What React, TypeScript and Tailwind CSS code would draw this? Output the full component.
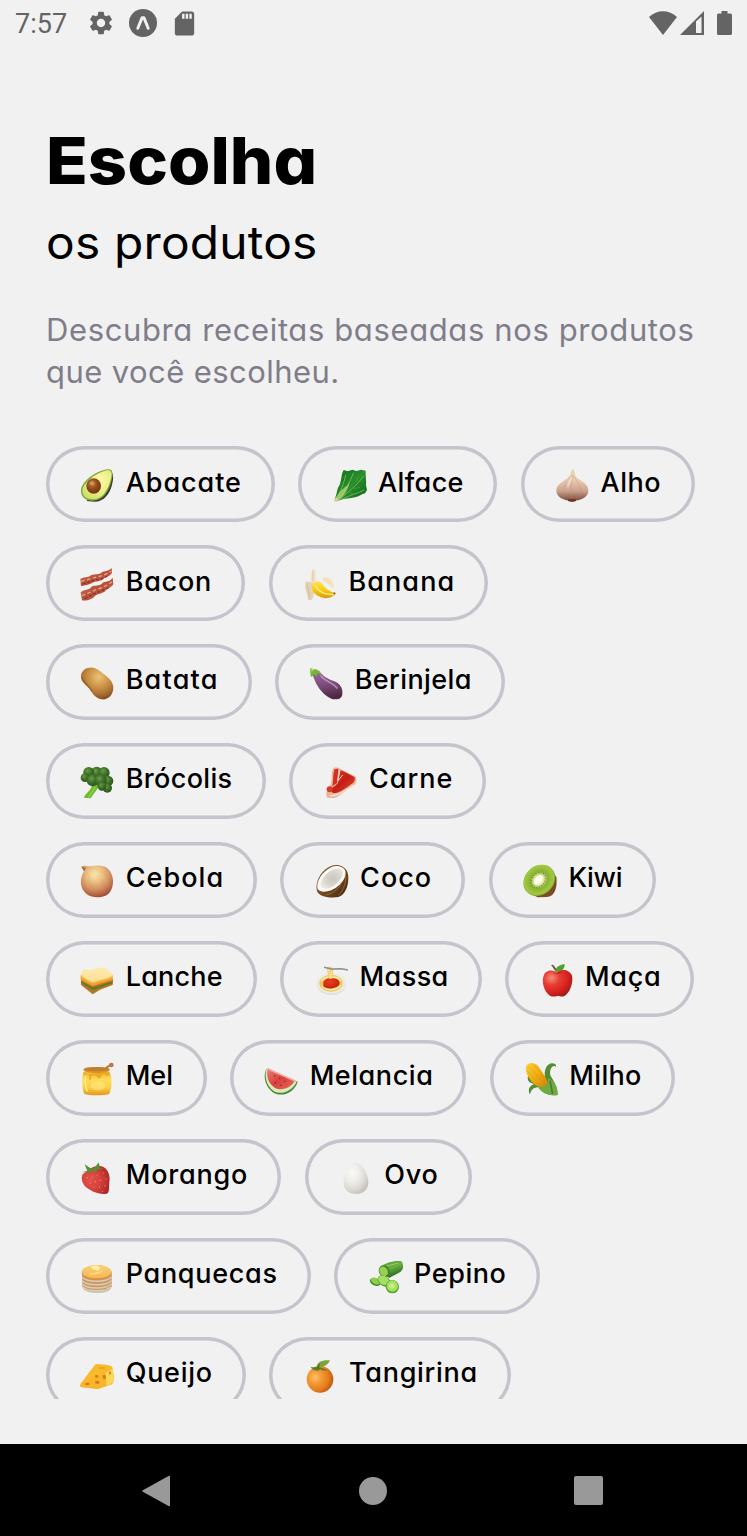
import type { ReactNode } from "react";
import { MdSdCard, MdSettings } from "react-icons/md";

type Stops = string[];

function Radial({ id, c, at = [0.4, 0.35], r = 0.7 }: { id: string; c: Stops; at?: number[]; r?: number }) {
  return (
    <radialGradient id={id} cx={at[0]} cy={at[1]} r={r}>
      {c.map((color, i) => (
        <stop key={i} offset={i / (c.length - 1)} stopColor={color} />
      ))}
    </radialGradient>
  );
}

function Linear({ id, c, to = [0, 1] }: { id: string; c: Stops; to?: number[] }) {
  return (
    <linearGradient id={id} x1="0" y1="0" x2={to[0]} y2={to[1]}>
      {c.map((color, i) => (
        <stop key={i} offset={i / (c.length - 1)} stopColor={color} />
      ))}
    </linearGradient>
  );
}

const drawings: Record<string, ReactNode> = {
  Abacate: (
    <>
      <Radial id="av1" c={["#fdf9a8", "#eef08a", "#cfe06a"]} at={[0.6, 0.35]} />
      <Radial id="av2" c={["#c98245", "#8f4a1c", "#6c3413"]} />
      <path d="M88 8C103 12 100 36 96 50C90 76 72 101 44 101L20 99Z" fill="#3c3a34" />
      <path d="M84 4C97 3 99 14 97 26C93 52 78 98 38 98C14 98 2 86 3 66C5 42 46 8 84 4Z" fill="#7fa83a" />
      <path d="M84 7C94 7 96 15 94 26C88 52 75 94 38 94C17 94 7 83 7 67C9 45 50 11 84 7Z" fill="url(#av1)" />
      <ellipse cx="41" cy="54" rx="22" ry="23" fill="url(#av2)" />
      <ellipse cx="36" cy="46" rx="7" ry="6" fill="#dca06a" opacity=".7" />
    </>
  ),
  Alface: (
    <>
      <Linear id="lt1" c={["#0b6b1c", "#2a8f2c", "#0c5f1c"]} to={[1, 1]} />
      <path d="M32 6L44 10L58 5L70 9L84 5L98 8C97 24 101 38 99 52L102 66L96 76C86 78 78 86 66 88C50 92 36 92 22 96L8 100L5 92C12 82 10 66 18 54C26 40 24 18 32 6Z" fill="url(#lt1)" />
      <path d="M20 90C18 70 34 48 38 20M22 90C36 68 52 40 62 14M22 92C48 70 72 52 92 24M24 94C50 82 76 76 94 66" stroke="#7cc35a" strokeWidth="3" fill="none" opacity=".8" />
      <path d="M40 62L30 52M64 62L80 58M50 74L66 80M70 42L74 26" stroke="#3f9f36" strokeWidth="3" />
      <path d="M6 99C4 90 14 82 18 74C28 62 40 56 50 44C44 64 36 80 24 90C20 98 12 101 6 99Z" fill="#a9d077" opacity=".85" />
      <circle cx="10" cy="95" r="6" fill="#d9c6a4" />
    </>
  ),
  Alho: (
    <>
      <Linear id="ga1" c={["#e8d6a8", "#e6cdb2", "#cda290", "#74432f"]} />
      <path d="M53 4C58 5 58 14 60 22C66 36 100 42 100 68C100 86 80 96 64 97C60 102 44 102 40 97C24 96 4 86 4 68C4 44 38 36 45 22C48 14 49 6 53 4Z" fill="url(#ga1)" />
      <path d="M50 22C32 44 22 54 26 90M53 22C50 50 46 62 50 97M56 24C70 48 84 60 76 90" stroke="#b98a78" strokeWidth="2" fill="none" opacity=".5" />
      <path d="M48 26C38 42 36 50 38 62C44 46 50 38 52 26Z" fill="#fff2d8" opacity=".5" />
      <ellipse cx="51" cy="97" rx="13" ry="4" fill="#69351f" />
    </>
  ),
  Bacon: (
    <>
      <Linear id="bc1" c={["#d77a5e", "#b5503a", "#cd6b50"]} to={[1, 1]} />
      <path d="M1 36C12 28 22 34 34 24C46 20 58 24 68 14C78 12 86 12 95 3L96 18C88 30 78 28 68 38C54 44 44 42 32 50C20 56 10 54 3 58Z" fill="url(#bc1)" />
      <path d="M2 76C14 66 26 72 36 58C50 54 60 58 70 46C80 42 90 44 98 32L100 52C92 64 84 62 74 74C60 82 48 80 40 92C28 99 14 102 6 100Z" fill="url(#bc1)" />
      <path d="M3 43C22 38 38 34 50 30C66 26 80 22 94 12M5 86C20 80 34 76 48 68C66 62 82 56 99 42" stroke="#e9a283" strokeWidth="4" fill="none" strokeDasharray="11 7" />
      <path d="M8 51C28 46 42 38 58 38L82 28M14 95C34 86 50 76 64 72L90 60" stroke="#8f3022" strokeWidth="3.5" fill="none" strokeDasharray="9 5" />
    </>
  ),
  Banana: (
    <>
      <Linear id="bn1" c={["#ffe45c", "#f8cb13", "#d99a08"]} />
      <path d="M32 4C42 12 42 36 38 52L24 54C20 36 22 16 32 4Z" fill="#f2e5cf" />
      <path d="M60 32C76 26 94 42 93 64C82 60 74 46 60 42Z" fill="#f3e3b8" />
      <path d="M8 44C16 42 32 48 38 54C34 72 34 86 26 99L14 98C18 84 2 70 8 44Z" fill="#e5d2b5" />
      <path d="M12 50L20 94M30 10L30 44" stroke="#cbb28d" strokeWidth="2" />
      <path d="M28 50C38 40 50 40 58 50C64 62 80 74 98 78C90 94 64 98 48 88C34 82 22 66 28 50Z" fill="url(#bn1)" />
      <path d="M36 54C44 70 62 84 92 82" stroke="#fff08e" strokeWidth="4" fill="none" />
      <path d="M91 76L98 78L94 84Z" fill="#6f5413" />
    </>
  ),
  Batata: (
    <>
      <Radial id="pt1" c={["#ecc27a", "#d39c4d", "#b07333", "#704019"]} at={[0.55, 0.3]} r={0.78} />
      <path d="M24 6C42 0 54 10 66 20C82 32 100 44 100 66C99 88 84 103 64 100C48 96 38 86 30 70C18 56 0 46 3 28C5 16 14 8 24 6Z" fill="url(#pt1)" />
      <path d="M6 34C12 52 28 60 36 76" stroke="#714016" strokeWidth="4" fill="none" opacity=".5" />
    </>
  ),
  Berinjela: (
    <>
      <Linear id="eg1" c={["#9d6aa2", "#80507f", "#512947"]} to={[0.2, 1]} />
      <path d="M10 20L30 14C42 30 54 38 72 44C94 52 102 66 100 84C99 96 90 101 78 100C50 98 18 60 10 20Z" fill="url(#eg1)" />
      <path d="M36 30C48 46 72 50 84 66" stroke="#c6a1ca" strokeWidth="5" fill="none" strokeLinecap="round" opacity=".75" />
      <path d="M3 8L12 11C22 6 34 14 36 27L26 21L22 32L16 24L8 34C2 26 5 18 3 8Z" fill="#75b536" />
      <path d="M2 6L9 5L14 15L8 16Z" fill="#a9d95e" />
    </>
  ),
  "Brócolis": (
    <>
      <Radial id="br1" c={["#6c9b45", "#3d7029", "#285119"]} />
      <path d="M36 60L60 60C50 76 42 84 32 100L12 98C14 86 34 78 36 60Z" fill="#6dbb2a" />
      <path d="M46 66L26 96" stroke="#9bd256" strokeWidth="4" />
      <g fill="url(#br1)">
        <circle cx="50" cy="23" r="18" /><circle cx="26" cy="22" r="16" /><circle cx="72" cy="23" r="17" />
        <circle cx="15" cy="38" r="13" /><circle cx="84" cy="48" r="16" /><circle cx="38" cy="46" r="18" />
        <circle cx="62" cy="46" r="18" /><circle cx="82" cy="69" r="14" /><circle cx="66" cy="64" r="13" />
      </g>
    </>
  ),
  Carne: (
    <>
      <Linear id="mt1" c={["#e33b28", "#c51f15", "#df4632"]} to={[1, 1]} />
      <path d="M28 9C36 5 44 8 50 12L66 20L94 34C102 48 96 62 80 68C62 78 48 96 28 99L10 98C2 84 12 70 20 58C26 40 20 20 28 9Z" fill="#e9b49c" />
      <path d="M32 13L43 11L39 54L25 64C29 46 26 26 32 13Z" fill="#d62d1e" />
      <path d="M49 15L64 22L92 37C95 52 84 56 72 65C56 74 46 85 27 84C19 79 22 67 32 64L42 54Z" fill="url(#mt1)" />
      <path d="M48 14L41 48L56 30" stroke="#f8ddcd" strokeWidth="3" fill="none" />
      <circle cx="17" cy="73" r="9" fill="#d83928" />
      <path d="M18 92C44 94 58 79 90 60" stroke="#fce6d2" strokeWidth="4" fill="none" />
    </>
  ),
  Cebola: (
    <>
      <Radial id="on1" c={["#f9e9ac", "#ecc084", "#d18c5e", "#a14a31"]} at={[0.43, 0.27]} r={0.75} />
      <path d="M4 8C12 2 22 8 30 7C48 4 70 2 84 14C104 34 102 66 90 84C78 103 38 105 20 90C-2 74 -1 40 12 22Z" fill="url(#on1)" />
      <path d="M14 14C6 38 10 72 36 96M18 12C28 50 38 76 58 99M20 12C56 32 76 62 82 90M22 10C60 16 84 32 96 58" stroke="#af6843" strokeWidth="1.5" fill="none" opacity=".2" />
      <path d="M4 8L12 22L18 12Z" fill="#a56b42" />
    </>
  ),
  Coco: (
    <>
      <Linear id="co1" c={["#806348", "#7a4c22", "#40240f"]} to={[1, 1]} />
      <Radial id="co2" c={["#c9c7be", "#d8d6ce", "#f2f1ec"]} at={[0.55, 0.5]} />
      <path d="M48 6C68 -1 90 6 98 26C105 54 94 92 70 99C48 103 16 99 7 84C-2 60 14 20 48 6Z" fill="url(#co1)" />
      <path d="M50 9C64 2 86 8 91 20C95 38 82 56 68 67C52 82 20 90 8 76C2 52 22 22 50 9Z" fill="#faf9f4" />
      <path d="M52 17C66 11 78 13 83 23C86 35 76 46 64 60C48 74 26 78 17 70C13 51 32 27 52 17Z" fill="url(#co2)" />
      <path d="M92 36C94 58 84 80 70 94M78 60C68 78 52 88 34 93" stroke="#a57f54" strokeWidth="2" fill="none" />
    </>
  ),
  Kiwi: (
    <>
      <Radial id="ki1" c={["#fffbe2", "#e6eeb0", "#8bb035", "#9cc53a", "#aed046"]} at={[0.5, 0.5]} r={0.58} />
      <path d="M86 16L100 40C104 72 94 98 72 99L44 100L24 90Z" fill="#7c4c2a" />
      <ellipse cx="49" cy="49" rx="51" ry="43" transform="rotate(-42 49 49)" fill="#86ae2e" />
      <ellipse cx="48" cy="48" rx="49" ry="41" transform="rotate(-42 48 48)" fill="url(#ki1)" />
      <ellipse cx="46" cy="48" rx="25" ry="19" transform="rotate(-52 46 48)" fill="none" stroke="#56752a" strokeWidth="4" strokeDasharray="2 6" />
      <ellipse cx="46" cy="48" rx="17" ry="10" transform="rotate(-52 46 48)" fill="#fffce9" />
    </>
  ),
  Lanche: (
    <>
      <Linear id="sa1" c={["#fdecb0", "#f9df94"]} to={[0, 1]} />
      <path d="M3 50L38 70L99 52L98 66L60 80L38 94L3 66Z" fill="#b87428" />
      <path d="M3 48L38 68L99 50L97 61L38 82L4 60Z" fill="#5d7f22" />
      <path d="M3 46L38 66L99 48L99 54L38 73L3 54Z" fill="#e2701f" />
      <path d="M2 38L38 60L99 40L98 50L38 68L2 50Z" fill="#eda437" />
      <path d="M8 22C18 18 26 24 38 18C52 16 64 10 74 14C84 22 94 26 99 38C90 48 62 52 38 58C22 54 14 46 2 38C2 32 6 28 8 22Z" fill="url(#sa1)" />
      <path d="M2 38C14 46 22 54 38 58C62 52 90 48 99 38" stroke="#f4c34f" strokeWidth="4" fill="none" />
    </>
  ),
  Massa: (
    <>
      <Radial id="sp1" c={["#e93d20", "#d92e17", "#bf210f"]} />
      <ellipse cx="52" cy="64" rx="44" ry="32" fill="#dedede" />
      <ellipse cx="52" cy="61" rx="44" ry="31" fill="#eeeae0" />
      <ellipse cx="51" cy="61" rx="35" ry="25" fill="#eec75f" />
      <path d="M22 54C32 38 70 38 80 54M24 70C40 84 66 84 80 66" stroke="#fff0a6" strokeWidth="4" fill="none" />
      <path d="M28 62C26 50 42 44 54 46C70 44 80 54 76 66C66 78 38 80 28 70Z" fill="url(#sp1)" />
      <path d="M38 14C46 8 58 12 58 20L54 48L44 46Z" fill="#f1cb70" />
      <path d="M44 18L48 46M53 16L50 46" stroke="#fff0ba" strokeWidth="2" />
      <path d="M30 13L52 18L82 17L102 21" stroke="#8d9090" strokeWidth="4.5" fill="none" />
    </>
  ),
  "Maça": (
    <>
      <Radial id="ap1" c={["#f58e78", "#e73e34", "#d9221f", "#991a17"]} at={[0.3, 0.3]} r={0.8} />
      <path d="M50 28C42 22 40 12 33 6L39 5C46 11 50 20 54 26Z" fill="#76543a" />
      <path d="M46 25C48 10 62 4 74 4C74 18 64 30 48 29Z" fill="#51a131" />
      <path d="M50 29C62 16 88 18 96 38C101 60 88 92 72 100C62 102 58 98 52 99C44 101 36 102 30 98C12 86 4 56 11 38C18 19 40 20 50 29Z" fill="url(#ap1)" />
      <path d="M40 29C46 34 60 33 64 27C58 25 54 30 50 31Z" fill="#a72018" />
    </>
  ),
  Mel: (
    <>
      <Linear id="ho1" c={["#f3b42b", "#ffdc5a", "#fbcf42", "#df981a"]} />
      <path d="M78 18L92 8" stroke="#a96d37" strokeWidth="5" />
      <circle cx="94" cy="9" r="7" fill="#b97843" />
      <path d="M12 30C4 44 6 82 13 96C28 101 74 101 88 96C96 76 97 44 88 30Z" fill="url(#ho1)" />
      <path d="M10 38V30C20 36 24 36 27 42V53C30 59 34 52 35 42C44 36 50 42 54 48C60 56 64 42 68 37C76 35 80 46 88 38V30Z" fill="#e9a324" opacity=".8" />
      <ellipse cx="50" cy="24" rx="40" ry="9" fill="#d99025" />
      <ellipse cx="50" cy="21" rx="38" ry="6" fill="#c07f2b" />
      <path d="M17 42C14 60 17 76 22 88" stroke="#fff2a1" strokeWidth="4" fill="none" />
      <ellipse cx="54" cy="72" rx="22" ry="14" fill="#fff3a0" opacity=".4" />
    </>
  ),
  Melancia: (
    <>
      <Linear id="wa1" c={["#e78178", "#d9413d", "#e36a60"]} to={[1, 1]} />
      <path d="M8 20C-5 42 4 76 28 92C58 108 93 88 101 59Z" fill="#478a38" />
      <path d="M8 20C-1 46 10 76 32 89C58 100 88 82 98 59Z" fill="#dceab8" />
      <path d="M12 19C5 40 12 64 32 77C54 88 80 78 92 57Z" fill="url(#wa1)" />
      <path d="M10 20L94 57" stroke="#f0aba2" strokeWidth="5" />
      <g fill="#8e3029"><circle cx="32" cy="42" r="2.5" /><circle cx="47" cy="49" r="2.5" /><circle cx="62" cy="58" r="2.5" /><circle cx="34" cy="62" r="2.5" /><circle cx="51" cy="70" r="2.5" /></g>
    </>
  ),
  Milho: (
    <>
      <Linear id="cn1" c={["#fbcf3a", "#efab10", "#c98009"]} to={[1, 1]} />
      <path d="M66 56C56 34 66 4 84 4C93 4 97 8 96 14C84 6 74 26 80 42C90 58 101 76 101 99C76 103 54 94 46 76C28 74 20 86 18 98C8 78 22 70 30 66C20 62 8 60 12 42C16 36 40 30 66 56Z" fill="#558b35" />
      <path d="M8 10C20 -3 40 4 48 20C60 38 72 56 76 76C54 82 32 74 18 52C8 38 2 22 8 10Z" fill="url(#cn1)" />
      <path d="M14 16C34 32 50 52 66 72M28 8C48 28 60 50 72 68M11 28C26 42 34 60 50 73" stroke="#b87909" strokeWidth="2" strokeDasharray="4 4" fill="none" opacity=".7" />
      <path d="M72 48C94 58 102 78 101 99C76 104 46 90 42 72C58 80 72 74 72 48Z" fill="#6dac43" />
      <path d="M78 56L86 96" stroke="#4f7a30" strokeWidth="5" />
    </>
  ),
  Morango: (
    <>
      <Radial id="st1" c={["#e3524a", "#d4403b", "#a92222"]} at={[0.3, 0.5]} r={0.78} />
      <path d="M8 40C22 28 42 10 64 16C82 20 92 42 88 62C87 82 88 96 80 98C60 102 26 90 12 72C4 60 4 48 8 40Z" fill="url(#st1)" />
      <path d="M4 34L22 30L14 10L35 24L44 20L56 4L60 20L72 22L54 25L44 34L38 27L26 38L24 32Z" fill="#559134" />
      <g fill="#f0a065"><circle cx="22" cy="50" r="1.8" /><circle cx="36" cy="48" r="1.8" /><circle cx="52" cy="42" r="1.8" /><circle cx="70" cy="36" r="1.8" /><circle cx="30" cy="66" r="1.8" /><circle cx="46" cy="62" r="1.8" /><circle cx="62" cy="58" r="1.8" /><circle cx="78" cy="54" r="1.8" /><circle cx="42" cy="78" r="1.8" /><circle cx="58" cy="78" r="1.8" /><circle cx="75" cy="74" r="1.8" /><circle cx="67" cy="91" r="1.8" /></g>
    </>
  ),
  Ovo: (
    <>
      <Radial id="ov1" c={["#f8f8f6", "#efefeb", "#dddbd5", "#bfbcb4"]} at={[0.35, 0.32]} r={0.78} />
      <path d="M50 5C68 5 88 38 88 64C88 87 72 99 51 99C28 99 14 86 14 64C14 38 32 5 50 5Z" fill="url(#ov1)" />
    </>
  ),
  Panquecas: (
    <>
      <Linear id="pc1" c={["#f9d078", "#f5b653"]} />
      <ellipse cx="51" cy="83" rx="42" ry="16" fill="#c5c3bf" />
      <path d="M6 38H95V80C84 99 16 98 7 80Z" fill="#c39a70" />
      <path d="M6 52C22 68 78 68 94 52M6 62C22 78 78 78 94 62M7 72C22 88 78 88 94 72M8 81C24 96 78 96 92 81" stroke="#e3cba9" strokeWidth="4.5" fill="none" />
      <ellipse cx="50" cy="38" rx="45" ry="22" fill="#d98f3c" />
      <ellipse cx="50" cy="35" rx="44" ry="20" fill="url(#pc1)" />
      <path d="M32 18L50 16L62 23L54 32L38 28Z" fill="#ffeea0" />
      <path d="M28 42C44 42 60 38 68 32" stroke="#fbdc82" strokeWidth="5" fill="none" />
    </>
  ),
  Pepino: (
    <>
      <Linear id="pe1" c={["#4c9b2d", "#6cb042", "#24631d"]} to={[0.5, 1]} />
      <path d="M34 22C50 7 78 1 97 4C106 14 103 28 94 36L60 54Z" fill="url(#pe1)" />
      <path d="M52 18L88 9" stroke="#9fce68" strokeWidth="3" />
      <ellipse cx="46" cy="34" rx="16" ry="19" transform="rotate(-28 46 34)" fill="#3f852c" />
      <ellipse cx="44" cy="34" rx="12" ry="15" transform="rotate(-28 44 34)" fill="#98d152" />
      <ellipse cx="19" cy="66" rx="17" ry="11" transform="rotate(24 19 66)" fill="#409029" />
      <ellipse cx="20" cy="63" rx="15" ry="9" transform="rotate(24 20 63)" fill="#8fcf4a" />
      <ellipse cx="45" cy="63" rx="21" ry="15" transform="rotate(35 45 63)" fill="#49952d" />
      <ellipse cx="44" cy="61" rx="18" ry="13" transform="rotate(35 44 61)" fill="#a6dd62" />
      <circle cx="70" cy="80" r="20" fill="#55a333" />
      <circle cx="70" cy="78" r="17" fill="#a6e060" />
      <circle cx="69" cy="78" r="8" fill="#c6ef8b" />
    </>
  ),
  Queijo: (
    <>
      <Linear id="ch1" c={["#fbc744", "#f5a818"]} to={[1, 1]} />
      <path d="M1 76L46 16L84 18L97 24L102 66L96 76L54 90L1 84Z" fill="url(#ch1)" />
      <path d="M1 76L48 16L84 18L97 25L54 46Z" fill="#f9bb2c" />
      <path d="M2 76C24 60 76 52 98 26L102 66C92 80 70 82 54 90L2 84Z" fill="#f8b52b" />
      <path d="M76 42C84 37 92 32 98 26L102 66C94 76 88 78 80 80Z" fill="#ffd557" />
      <g fill="#d08018"><ellipse cx="22" cy="75" rx="7" ry="4" /><ellipse cx="52" cy="70" rx="7" ry="5" /><ellipse cx="73" cy="54" rx="5" ry="7" /><ellipse cx="50" cy="52" rx="5" ry="4" /><ellipse cx="90" cy="42" rx="3" ry="5" /></g>
      <ellipse cx="66" cy="27" rx="11" ry="4" fill="#eca71d" />
    </>
  ),
  Tangirina: (
    <>
      <Radial id="ta1" c={["#fbc069", "#f29a34", "#e67c1d", "#b54c0e"]} at={[0.32, 0.42]} r={0.75} />
      <circle cx="48" cy="61" r="40" fill="url(#ta1)" />
      <path d="M20 23C34 29 40 17 50 26C60 28 68 32 69 35C60 36 54 34 48 31C42 39 38 33 30 34C27 30 23 29 20 23Z" fill="#5d7e29" />
      <path d="M38 24C38 10 54 2 78 4C72 18 62 22 44 26Z" fill="#7ba23b" />
      <path d="M42 28L46 16" stroke="#4d6822" strokeWidth="4" />
    </>
  ),
};

type Product = { name: string; width: string; tracking: string };

const rows: Product[][] = [
  [
    { name: "Abacate", width: "w-[229px]", tracking: "tracking-[0.95px]" },
    { name: "Alface", width: "w-[199px]", tracking: "tracking-[0.35px]" },
    { name: "Alho", width: "w-[173.8px]", tracking: "tracking-[0.55px]" },
  ],
  [
    { name: "Bacon", width: "w-[199.3px]", tracking: "tracking-[0.75px]" },
    { name: "Banana", width: "w-[219.7px]", tracking: "tracking-[1.1px]" },
  ],
  [
    { name: "Batata", width: "w-[205.6px]", tracking: "tracking-[1.2px]" },
    { name: "Berinjela", width: "w-[230.3px]", tracking: "tracking-[0.4px]" },
  ],
  [
    { name: "Brócolis", width: "w-[220px]", tracking: "tracking-[0.35px]" },
    { name: "Carne", width: "w-[197px]", tracking: "tracking-[0.95px]" },
  ],
  [
    { name: "Cebola", width: "w-[211px]", tracking: "tracking-[1.05px]" },
    { name: "Coco", width: "w-[185px]", tracking: "tracking-[1px]" },
    { name: "Kiwi", width: "w-[167.3px]", tracking: "tracking-[-0.3px]" },
  ],
  [
    { name: "Lanche", width: "w-[210.5px]", tracking: "tracking-[0.2px]" },
    { name: "Massa", width: "w-[202px]", tracking: "tracking-[0.4px]" },
    { name: "Maça", width: "w-[189px]", tracking: "tracking-[0.7px]" },
  ],
  [
    { name: "Mel", width: "w-[160.6px]", tracking: "tracking-[0px]" },
    { name: "Melancia", width: "w-[236.3px]", tracking: "tracking-[0.55px]" },
    { name: "Milho", width: "w-[185.5px]", tracking: "tracking-[0.3px]" },
  ],
  [
    { name: "Morango", width: "w-[235.2px]", tracking: "tracking-[0.8px]" },
    { name: "Ovo", width: "w-[167.3px]", tracking: "tracking-[0.8px]" },
  ],
  [
    { name: "Panquecas", width: "w-[265px]", tracking: "tracking-[0.7px]" },
    { name: "Pepino", width: "w-[206px]", tracking: "tracking-[0.55px]" },
  ],
  [
    { name: "Queijo", width: "w-[200px]", tracking: "tracking-[0.7px]" },
    { name: "Tangirina", width: "w-[241.5px]", tracking: "tracking-[0.7px]" },
  ],
];

function Chip({ name, width, tracking }: Product) {
  return (
    <button
      className={`flex h-[75.6px] shrink-0 items-start rounded-full pl-[34.3px] text-left shadow-[inset_0_0_0_3.5px_#c4c4cc] ${width}`}
    >
      <svg viewBox="0 0 102 102" className="mt-[22px] size-[34px] shrink-0">
        {drawings[name]}
      </svg>
      <span
        className={`mt-[19.2px] ml-[11.4px] text-[27px] leading-[34px] font-medium whitespace-nowrap ${tracking}`}
      >
        {name}
      </span>
    </button>
  );
}

function StatusBar() {
  return (
    <header className="flex h-[46px] items-center justify-between pr-[15px] pl-[15px] text-[#646464]">
      <div className="flex items-center">
        <span className="w-[72px] pt-[1px] font-['Roboto',sans-serif] text-[27px] leading-[46px]">7:57</span>
        <MdSettings className="size-[28px]" />
        <svg viewBox="0 0 28 28" className="ml-[14.3px] size-[28px]">
          <circle cx="14" cy="14" r="14" fill="currentColor" />
          <path d="M8.8 19.3L13.1 8.6H14.9L19.2 19.3" stroke="#f1f1f1" strokeWidth="2.9" strokeLinejoin="round" strokeLinecap="round" fill="none" />
        </svg>
        <MdSdCard className="ml-[13.2px] size-[29px]" />
      </div>
      <div className="flex items-center">
        <svg viewBox="0 0 28 24" className="h-[24px] w-[28px]" fill="currentColor">
          <path d="M0 6C8-1.7 20-1.7 28 6L14 24Z" />
        </svg>
        <svg viewBox="0 0 24 24" className="ml-[3px] size-[24px]" fill="currentColor">
          <path fillRule="evenodd" d="M0 24L24 0V24ZM16 10.5V22H21.5V5.5Z" />
        </svg>
        <svg viewBox="0 0 15 24" className="ml-[13.5px] h-[24px] w-[15px]" fill="currentColor">
          <path d="M4.5 0H10.5V2.5H13.5Q15 2.5 15 4V22.5Q15 24 13.5 24H1.5Q0 24 0 22.5V4Q0 2.5 1.5 2.5H4.5Z" />
        </svg>
      </div>
    </header>
  );
}

function NavigationBar() {
  return (
    <nav className="flex h-[92px] items-center justify-between bg-black pt-[1px] pr-[144px] pl-[142px] text-[#999999]">
      <svg viewBox="0 0 28 32" className="h-[32px] w-[28px]" fill="currentColor">
        <path d="M27 .8Q28 .4 28 1.5V30.5Q28 31.6 27 31.2L.8 16.8Q-.3 16 .8 15.2Z" />
      </svg>
      <div className="ml-[2.4px] size-[28px] rounded-full bg-[#999999]" />
      <div className="size-[29px] rounded-[2px] bg-[#999999]" />
    </nav>
  );
}

export default function App() {
  return (
    <div className="flex h-[1536px] w-[747px] flex-col overflow-hidden bg-[#f1f1f1] font-['Inter',sans-serif] text-black [font-feature-settings:'cv11']">
      <StatusBar />
      <main className="flex min-h-0 flex-1 flex-col pb-[45px] pl-[46px]">
        <h1 className="mt-[75px] origin-left scale-x-[1.055] text-[65px] leading-[80px] font-extrabold">Escolha</h1>
        <h2 className="mt-[11.4px] origin-left scale-x-[1.04] text-[46px] leading-[60px] tracking-[0.2px]">os produtos</h2>
        <p className="mt-[36.2px] text-[31px] leading-[42px] whitespace-nowrap text-[#807d8a]">
          <span className="block tracking-[0.62px]">Descubra receitas baseadas nos produtos</span>
          <span className="block tracking-[0.42px]">que você escolheu.</span>
        </p>
        <div className="mt-[53.8px] flex min-h-0 flex-1 flex-col gap-[23.37px] overflow-hidden">
          {rows.map((row) => (
            <div key={row[0].name} className="flex shrink-0 gap-[23.4px]">
              {row.map((product) => (
                <Chip key={product.name} {...product} />
              ))}
            </div>
          ))}
        </div>
      </main>
      <NavigationBar />
    </div>
  );
}
